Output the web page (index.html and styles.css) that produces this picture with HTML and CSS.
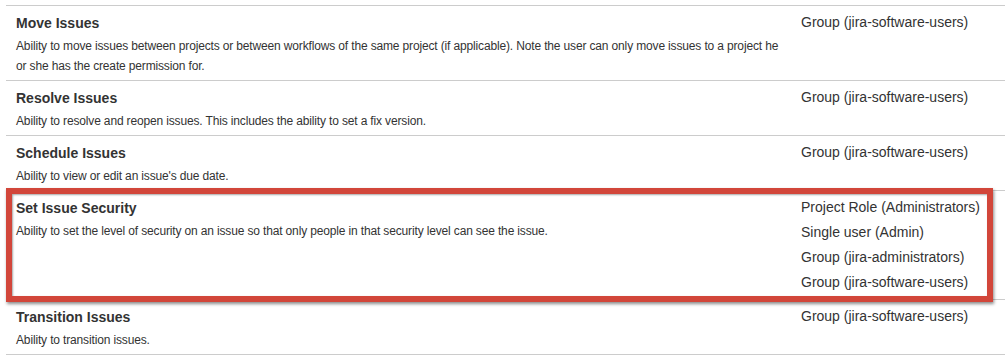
FILE: index.html
```html
<!DOCTYPE html>
<html lang="en">
<head>
    <meta charset="UTF-8">
    <title>Permissions</title>
    <link rel="stylesheet" href="styles.css">
</head>
<body>
    <div class="permissions">
        <div class="perm-row">
            <div class="perm-info">
                <div class="perm-name">Move Issues</div>
                <div class="perm-desc">Ability to move issues between projects or between workflows of the same project (if applicable). Note the user can only move issues to a project he or she has the create permission for.</div>
            </div>
            <div class="perm-grants">
                <div>Group (jira-software-users)</div>
            </div>
        </div>
        <div class="perm-row">
            <div class="perm-info">
                <div class="perm-name">Resolve Issues</div>
                <div class="perm-desc">Ability to resolve and reopen issues. This includes the ability to set a fix version.</div>
            </div>
            <div class="perm-grants">
                <div>Group (jira-software-users)</div>
            </div>
        </div>
        <div class="perm-row">
            <div class="perm-info">
                <div class="perm-name">Schedule Issues</div>
                <div class="perm-desc">Ability to view or edit an issue's due date.</div>
            </div>
            <div class="perm-grants">
                <div>Group (jira-software-users)</div>
            </div>
        </div>
        <div class="perm-row">
            <div class="perm-info">
                <div class="perm-name">Set Issue Security</div>
                <div class="perm-desc">Ability to set the level of security on an issue so that only people in that security level can see the issue.</div>
            </div>
            <div class="perm-grants">
                <div>Project Role (Administrators)</div>
                <div>Single user (Admin)</div>
                <div>Group (jira-administrators)</div>
                <div>Group (jira-software-users)</div>
            </div>
        </div>
        <div class="perm-row">
            <div class="perm-info">
                <div class="perm-name">Transition Issues</div>
                <div class="perm-desc">Ability to transition issues.</div>
            </div>
            <div class="perm-grants">
                <div>Group (jira-software-users)</div>
            </div>
        </div>

        <!-- annotation around the Set Issue Security row -->
        <div class="highlight"></div>
    </div>
</body>
</html>
```

FILE: styles.css
```css
* {
    margin: 0;
    padding: 0;
    box-sizing: border-box;
}

body {
    background-color: #fff;
    font-family: "Liberation Sans", Arial, sans-serif;
    color: #333;
    padding-top: 5px;
    padding-left: 6px;
    overflow: hidden;
}

.permissions {
    position: relative;
    border-bottom: 1px solid #ccc;
}

.perm-row {
    display: grid;
    grid-template-columns: 785px 1fr;
    border-top: 1px solid #ccc;
    padding: 4px 0;
}

.perm-info {
    padding: 3px 0 0 10px;
}

.perm-name {
    font-size: 14px;
    font-weight: bold;
    line-height: 20px;
    margin-bottom: 3px;
}

.perm-desc {
    font-size: 12px;
    letter-spacing: -0.15px;
    line-height: 20px;
}

.perm-grants {
    padding-left: 10px;
    font-size: 14px;
    line-height: 25px;
}

.highlight {
    position: absolute;
    left: 0;
    top: 183px;
    width: 987px;
    height: 114px;
    border: 6px solid #d2463a;
    box-shadow: 1px 2px 3px rgba(0, 0, 0, 0.45), inset 1px 1px 2px rgba(0, 0, 0, 0.35);
}
```
